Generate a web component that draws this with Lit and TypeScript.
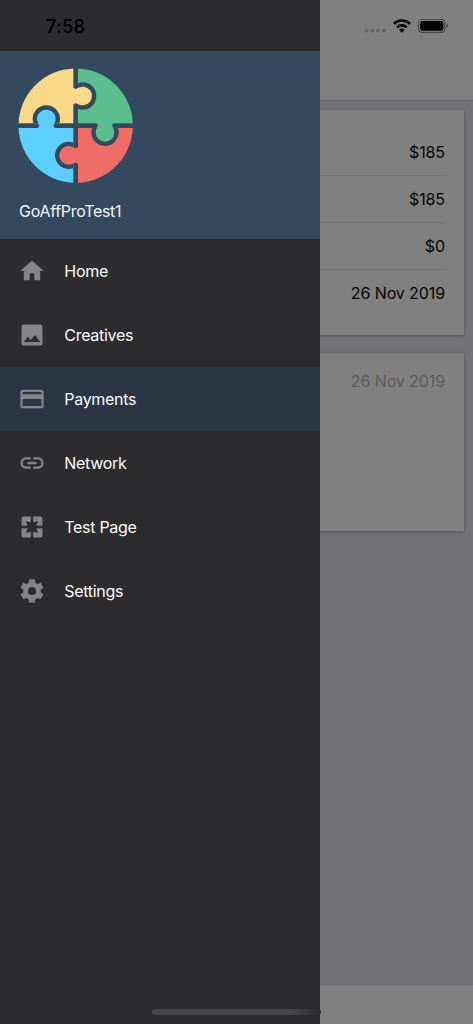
import { LitElement, html, css, svg } from "lit";
import { customElement, property } from "lit/decorators.js";

const ICONS: Record<string, string> = {
  home: "M10 20v-6h4v6h5v-8h3L12 3 2 12h3v8z",
  image: "M21 19V5c0-1.1-.9-2-2-2H5c-1.1 0-2 .9-2 2v14c0 1.1.9 2 2 2h14c1.1 0 2-.9 2-2zM8.5 13.5l2.5 3.01L14.5 12l4.5 6H5l3.5-4.5z",
  card: "M20 4H4c-1.11 0-1.99.89-1.99 2L2 18c0 1.11.89 2 2 2h16c1.11 0 2-.89 2-2V6c0-1.11-.89-2-2-2zm0 14H4v-6h16v6zm0-10H4V6h16v2z",
  link: "M3.9 12c0-1.71 1.39-3.1 3.1-3.1h4V7H7c-2.76 0-5 2.24-5 5s2.24 5 5 5h4v-1.9H7c-1.71 0-3.1-1.39-3.1-3.1zM8 13h8v-2H8v2zm9-6h-4v1.9h4c1.71 0 3.1 1.39 3.1 3.1s-1.39 3.1-3.1 3.1h-4V17h4c2.76 0 5-2.24 5-5s-2.24-5-5-5z",
  pages: "M3 5v6h5L7 7l4 1V3H5c-1.1 0-2 .9-2 2zm5 8H3v6c0 1.1.9 2 2 2h6v-5l-4 1 1-4zm9 4l-4-1v5h6c1.1 0 2-.9 2-2v-6h-5l1 4zm2-14h-6v5l4-1-1 4h5V5c0-1.1-.9-2-2-2z",
  settings: "M12 15.5A3.5 3.5 0 0 1 8.5 12 3.5 3.5 0 0 1 12 8.5a3.5 3.5 0 0 1 3.5 3.5 3.5 3.5 0 0 1-3.5 3.5m7.43-2.53c.04-.32.07-.64.07-.97s-.03-.66-.07-1l2.11-1.63c.19-.15.24-.42.12-.64l-2-3.46c-.12-.22-.39-.31-.61-.22l-2.49 1c-.52-.39-1.06-.73-1.69-.98l-.37-2.65A.506.506 0 0 0 14 2h-4c-.25 0-.46.18-.5.42l-.37 2.65c-.63.25-1.17.59-1.69.98l-2.49-1c-.22-.09-.49 0-.61.22l-2 3.46c-.13.22-.07.49.12.64L4.57 11c-.04.34-.07.67-.07 1s.03.65.07.97l-2.11 1.66c-.19.15-.25.42-.12.64l2 3.46c.12.22.39.3.61.22l2.49-1.01c.52.4 1.06.74 1.69.99l.37 2.65c.04.24.25.42.5.42h4c.25 0 .46-.18.5-.42l.37-2.65c.63-.26 1.17-.59 1.69-.99l2.49 1.01c.22.08.49 0 .61-.22l2-3.46c.12-.22.07-.49-.12-.64z",
};

const MENU = [
  { icon: "home", label: "Home" },
  { icon: "image", label: "Creatives" },
  { icon: "card", label: "Payments", active: true },
  { icon: "link", label: "Network" },
  { icon: "pages", label: "Test Page" },
  { icon: "settings", label: "Settings" },
];

@customElement("puzzle-logo")
class PuzzleLogo extends LitElement {
  static styles = css`
    :host { display: block; width: 116px; height: 116px; }
    svg { display: block; }
  `;
  render() {
    return html`<svg width="116" height="116" viewBox="54 54 348 348">
      <defs>
        <clipPath id="tl"><rect x="50" y="50" width="170" height="170" /></clipPath>
        <clipPath id="tr"><rect x="234" y="50" width="170" height="170" /></clipPath>
        <clipPath id="bl"><rect x="50" y="234" width="170" height="170" /></clipPath>
        <clipPath id="br"><rect x="234" y="234" width="170" height="170" /></clipPath>
      </defs>
      <g clip-path="url(#tl)">
        <circle cx="227" cy="227" r="171.5" fill="#f9d888" />
        <circle cx="139" cy="207" r="41" fill="#34495e" />
      </g>
      <g clip-path="url(#tr)">
        <circle cx="227" cy="227" r="171.5" fill="#5cbe8f" />
        <circle cx="248" cy="138" r="41" fill="#34495e" />
      </g>
      <g clip-path="url(#bl)">
        <circle cx="227" cy="227" r="171.5" fill="#5dcfff" />
        <circle cx="206" cy="316" r="41" fill="#34495e" />
      </g>
      <g clip-path="url(#br)">
        <circle cx="227" cy="227" r="171.5" fill="#ee6d67" />
        <circle cx="315" cy="247" r="41" fill="#34495e" />
      </g>
      ${this.knob(248, 138, 270, "#f9d888")}
      ${this.knob(139, 207, 0, "#5dcfff")}
      ${this.knob(315, 247, 180, "#5cbe8f")}
      ${this.knob(206, 316, 90, "#ee6d67")}
    </svg>`;
  }
  private knob(x: number, y: number, angle: number, fill: string) {
    const turn = angle === 270 ? 90 : angle === 90 ? 270 : angle;
    return svg`<path transform="translate(${x} ${y}) rotate(${turn})" fill=${fill}
      d="M-25 34 V27 Q-19 22 -23 16 A28 28 0 1 1 23 16 Q19 22 25 27 V34 Z" />`;
  }
}

@customElement("menu-item")
class MenuItem extends LitElement {
  @property() icon = "";
  @property() label = "";
  static styles = css`
    :host { display: flex; align-items: center; height: 64px; padding-left: 18.3px; gap: 18px; box-sizing: border-box; }
    :host([active]) { background: #293444; }
    svg { width: 28px; height: 28px; fill: #848484; flex: none; }
    .label { font-size: 16px; line-height: 20px; padding-bottom: 1px; color: #fafafa; letter-spacing: -0.3px; }
  `;
  render() {
    return html`<svg viewBox="0 0 24 24"><path d=${ICONS[this.icon]} /></svg><span class="label">${this.label}</span>`;
  }
}

@customElement("app-root")
class AppRoot extends LitElement {
  static styles = css`
    :host {
      display: block; position: relative; width: 473px; height: 1024px; overflow: hidden;
      font-family: Inter, "Liberation Sans", sans-serif;
    }
    .page { height: 100%; display: flex; flex-direction: column; background: #727275; }
    .bar { height: 101px; box-sizing: border-box; background: #808080; border-bottom: 1px solid #6c6c6e; flex: none; }
    .content { flex: 1; display: flex; flex-direction: column; gap: 18px; padding: 9px 9.5px 0; }
    .card { background: #808080; padding: 19px 18.5px; box-sizing: border-box; box-shadow: 0 1px 3px rgba(0, 0, 0, 0.25); }
    .summary { height: 225px; }
    .payment { height: 178px; padding-top: 5px; }
    .row { height: 47.1px; box-sizing: border-box; display: flex; align-items: center; justify-content: flex-end; font-size: 16px; letter-spacing: -0.1px; color: #050505; border-bottom: 1px solid #747476; }
    .row:last-child { border-bottom-color: transparent; }
    .payment .row { color: #5f5b60; }
    .foot { height: 39px; background: #808080; flex: none; }
    .drawer { position: absolute; inset: 0 auto 0 0; width: 319.6px; background: #2c2c2e; display: flex; flex-direction: column; }
    .top { height: 51px; flex: none; }
    .profile { height: 188px; box-sizing: border-box; background: #34495e; padding: 17px 18px 0; flex: none; }
    .name { padding: 17px 0 0 1px; font-size: 16px; line-height: 20px; letter-spacing: -0.3px; color: #f3f5f7; }
    .status { position: absolute; inset: 0 0 auto 0; height: 52px; display: flex; align-items: center; justify-content: space-between; padding: 0 25px 0 46px; }
    .time { font-size: 18px; font-weight: 600; letter-spacing: 0.2px; color: #000; }
    .home-bar { position: absolute; left: 152px; top: 1009px; width: 169px; height: 6px; border-radius: 3px; background: linear-gradient(90deg, #474747 82%, #2a2a2b 100%); }
  `;
  render() {
    return html`
      <main class="page">
        <div class="bar"></div>
        <div class="content">
          <section class="card summary">
            ${["$185", "$185", "$0", "26 Nov 2019"].map((v) => html`<div class="row">${v}</div>`)}
          </section>
          <section class="card payment"><div class="row">26 Nov 2019</div></section>
        </div>
        <div class="foot"></div>
      </main>
      <nav class="drawer">
        <div class="top"></div>
        <header class="profile"><puzzle-logo></puzzle-logo><div class="name">GoAffProTest1</div></header>
        ${MENU.map((m) => html`<menu-item .icon=${m.icon} .label=${m.label} ?active=${m.active}></menu-item>`)}
      </nav>
      <div class="status">
        <span class="time">7:58</span>
        <svg width="84" height="20" viewBox="364 16 84 20">
          <g fill="#676767"><circle cx="366.6" cy="30.6" r="2" /><circle cx="372.4" cy="30.6" r="2" /><circle cx="378.1" cy="30.6" r="2" /><circle cx="383.8" cy="30.6" r="2" /></g>
          <g fill="none" stroke="#000" stroke-width="2.7">
            <path d="M393.7 23.9a11.6 11.6 0 0 1 16.4 0" />
            <path d="M397 27.4a7 7 0 0 1 9.8 0" />
          </g>
          <path d="M399.1 29.9a4 4 0 0 1 5.6 0L401.9 32.7z" />
          <rect x="418.6" y="19.5" width="26.4" height="12.9" rx="3.8" fill="none" stroke="#484848" stroke-width="1.1" />
          <rect x="420.2" y="21.1" width="23.2" height="9.7" rx="2.3" />
          <path d="M446.3 23.8q1.7.7 1.7 2.2t-1.7 2.2z" fill="#505050" />
        </svg>
      </div>
      <div class="home-bar"></div>
    `;
  }
}
